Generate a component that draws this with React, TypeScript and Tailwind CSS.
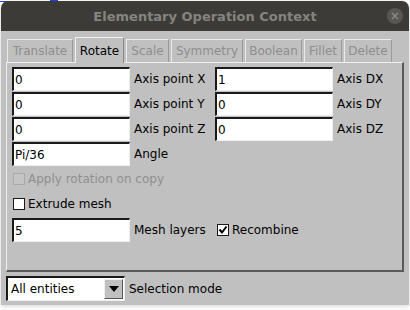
import React from "react";

const font = { fontFamily: '"DejaVu Sans", "Liberation Sans", sans-serif' };

function Field({ value, w = "w-[118px]" }: { value: string; w?: string }) {
  return (
    <div
      className={`${w} h-[24px] bg-white border-t-2 border-l-2 border-t-[#1a1a1a] border-l-[#1a1a1a] border-b border-r border-b-[#eeeeee] border-r-[#eeeeee] flex items-center pl-[1px] text-[12px] text-black leading-none`}
    >
      {value}
    </div>
  );
}

function Tab({ label, w, selected }: { label: string; w: string; selected?: boolean }) {
  if (selected) {
    return (
      <div
        className={`${w} h-[26px] -mb-[1px] relative z-10 bg-[#c0c0c0] border-l border-t border-r border-l-[#f2f2f2] border-t-[#f2f2f2] border-r-[#8a8a8a] flex items-center justify-center text-[12px] text-black`}
      >
        {label}
      </div>
    );
  }
  return (
    <div
      className={`${w} h-[23px] bg-[#c0c0c0] border-l border-t border-r border-l-[#eaeaea] border-t-[#eaeaea] border-r-[#9a9a9a] flex items-center justify-center text-[12px] text-[#8e8e8e]`}
    >
      {label}
    </div>
  );
}

function Check({ checked, disabled }: { checked?: boolean; disabled?: boolean }) {
  return (
    <div
      className={`w-[12px] h-[12px] border ${
        disabled ? "border-[#a8a8a8] bg-[#c4c4c4]" : "border-[#1a1a1a] bg-white"
      } flex items-center justify-center`}
    >
      {checked && (
        <svg width="10" height="10" viewBox="0 0 10 10">
          <path d="M1.5 4.5 L4 7.5 L8.5 1.5" stroke="#000" strokeWidth="2" fill="none" />
        </svg>
      )}
    </div>
  );
}

export default function App() {
  return (
    <div className="w-[410px] h-[310px] bg-white relative overflow-hidden" style={font}>
      <div className="absolute left-0 top-[1px] w-[30px] h-[1px] bg-[#2244ff]" />
      <div className="absolute left-[50px] top-0 w-[8px] h-[1px] bg-[#2244ff]" />
      <div className="relative ml-[1px] mt-[1px] w-[408px] h-[304px] flex flex-col shadow-[0_1px_5px_rgba(0,0,0,0.18)] rounded-t-[7px]">
        {/* title bar */}
        <div className="h-[30px] bg-[#3c3b37] rounded-t-[7px] flex items-center justify-center relative">
          <span
            className="text-[13px] font-bold text-[#85847f] pt-[1px]"
            style={{ fontFamily: '"DejaVu Sans", sans-serif' }}
          >
            Elementary Operation Context
          </span>
          <div className="absolute right-[6px] top-[7px] w-[16px] h-[16px] rounded-full bg-[#585753] flex items-center justify-center">
            <svg width="8" height="8" viewBox="0 0 8 8">
              <path d="M1 1 L7 7 M7 1 L1 7" stroke="#8e8d88" strokeWidth="1.2" />
            </svg>
          </div>
        </div>
        {/* body */}
        <div className="flex-1 bg-[#c0c0c0] flex flex-col">
          <div className="pl-[6px] pt-[5px] flex items-end gap-[2px] h-[31px]">
            <Tab label="Translate" w="w-[66px]" />
            <Tab label="Rotate" w="w-[49px]" selected />
            <Tab label="Scale" w="w-[43px]" />
            <Tab label="Symmetry" w="w-[72px]" />
            <Tab label="Boolean" w="w-[57px]" />
            <Tab label="Fillet" w="w-[38px]" />
            <Tab label="Delete" w="w-[48px]" />
          </div>
          <div className="ml-[5px] w-[398px] h-[210px] border-l border-t border-l-[#f0f0f0] border-t-[#f0f0f0] border-r-2 border-b-2 border-r-[#5a5a5a] border-b-[#5a5a5a] pl-[5px] pt-[4px] flex flex-col text-[12px] text-black">
            <div className="flex flex-col gap-[1px]">
              {[
                ["0", "Axis point X", "1", "Axis DX"],
                ["0", "Axis point Y", "0", "Axis DY"],
                ["0", "Axis point Z", "0", "Axis DZ"],
              ].map((r) => (
                <div key={r[1]} className="flex items-center">
                  <Field value={r[0]} />
                  <span className="ml-[4px] w-[81px]">{r[1]}</span>
                  <Field value={r[2]} />
                  <span className="ml-[4px]">{r[3]}</span>
                </div>
              ))}
              <div className="flex items-center">
                <Field value="Pi/36" />
                <span className="ml-[4px]">Angle</span>
              </div>
            </div>
            <div className="mt-[3px] h-[20px] flex items-center pl-[1px] gap-[3px] text-[#8f8f8f]">
              <Check disabled />
              <span>Apply rotation on copy</span>
            </div>
            <div className="mt-[5px] h-[20px] flex items-center pl-[1px] gap-[3px]">
              <Check />
              <span>Extrude mesh</span>
            </div>
            <div className="mt-[4px] flex items-center">
              <Field value="5" />
              <span className="ml-[4px] w-[81px]">Mesh layers</span>
              <div className="ml-[2px] flex items-center gap-[3px]">
                <Check checked />
                <span>Recombine</span>
              </div>
            </div>
          </div>
          <div className="mt-[4px] ml-[5px] flex items-center text-[12px] text-black">
            <div className="w-[119px] h-[25px] bg-white border-t-2 border-l-2 border-t-[#1a1a1a] border-l-[#1a1a1a] border-b border-r border-b-[#eeeeee] border-r-[#eeeeee] flex items-center">
              <span className="flex-1 pl-[3px]">All entities</span>
              <div className="w-[19px] h-[20px] mr-[1px] bg-[#c0c0c0] border-t border-l border-t-[#f0f0f0] border-l-[#f0f0f0] border-b border-r border-b-[#555] border-r-[#555] flex items-center justify-center">
                <svg width="10" height="6" viewBox="0 0 10 6">
                  <path d="M0 0 L10 0 L5 6 Z" fill="#000" />
                </svg>
              </div>
            </div>
            <span className="ml-[4px]">Selection mode</span>
          </div>
        </div>
      </div>
    </div>
  );
}
